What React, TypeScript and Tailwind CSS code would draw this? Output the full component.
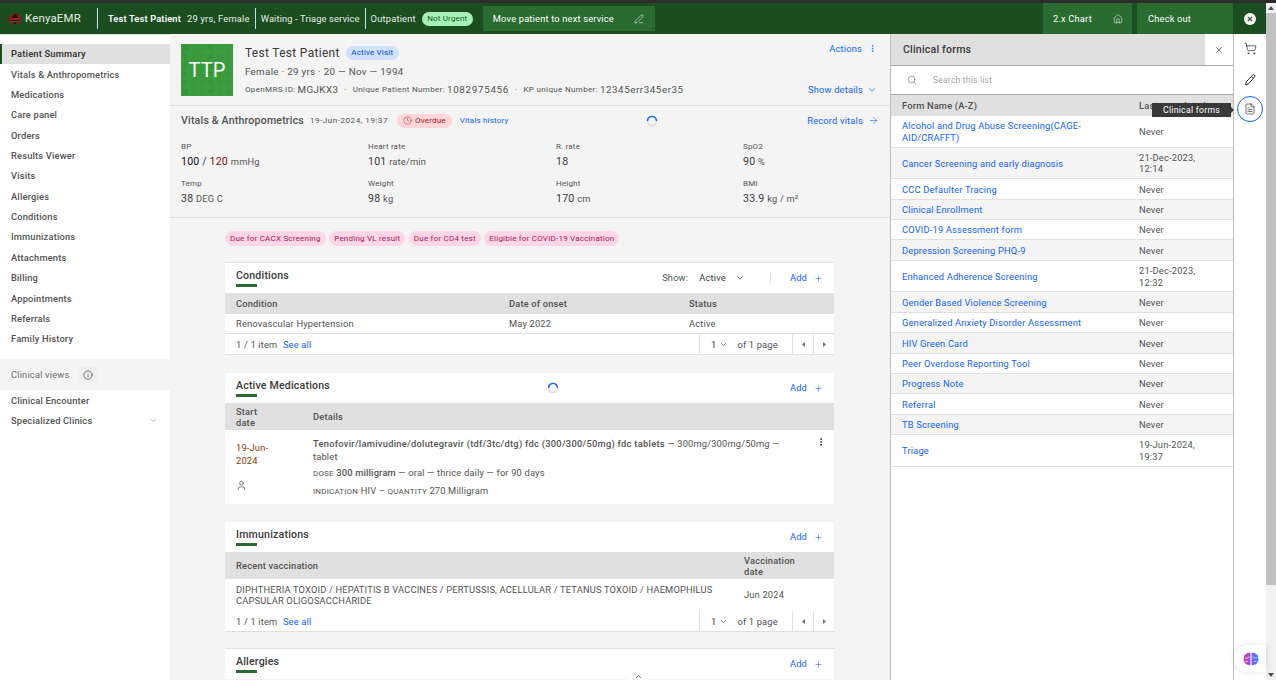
import { ArrowRight, ChevronDown, ChevronUp, Clock, EllipsisVertical, FileText, Home, Info, PenLine, Plus, Search, ShoppingCart, User, X } from 'lucide-react';
import type { ReactNode } from 'react';

const navItems = ['Patient Summary', 'Vitals & Anthropometrics', 'Medications', 'Care panel', 'Orders', 'Results Viewer', 'Visits', 'Allergies', 'Conditions', 'Immunizations', 'Attachments', 'Billing', 'Appointments', 'Referrals', 'Family History'];

const vitals = [
  { label: 'Heart rate', value: '101', unit: 'rate/min' },
  { label: 'R. rate', value: '18', unit: '' },
  { label: 'SpO2', value: '90', unit: '%' },
  { label: 'Temp', value: '38', unit: 'DEG C' },
  { label: 'Weight', value: '98', unit: 'kg' },
  { label: 'Height', value: '170', unit: 'cm' },
  { label: 'BMI', value: '33.9', unit: 'kg / m²' },
];

const forms = [
  { name: 'Alcohol and Drug Abuse Screening(CAGE-AID/CRAFFT)', last: 'Never', tall: true },
  { name: 'Cancer Screening and early diagnosis', last: '21-Dec-2023, 12:14', tall: true },
  { name: 'CCC Defaulter Tracing', last: 'Never' },
  { name: 'Clinical Enrollment', last: 'Never' },
  { name: 'COVID-19 Assessment form', last: 'Never' },
  { name: 'Depression Screening PHQ-9', last: 'Never' },
  { name: 'Enhanced Adherence Screening', last: '21-Dec-2023, 12:32', tall: true },
  { name: 'Gender Based Violence Screening', last: 'Never' },
  { name: 'Generalized Anxiety Disorder Assessment', last: 'Never' },
  { name: 'HIV Green Card', last: 'Never' },
  { name: 'Peer Overdose Reporting Tool', last: 'Never' },
  { name: 'Progress Note', last: 'Never' },
  { name: 'Referral', last: 'Never' },
  { name: 'TB Screening', last: 'Never' },
  { name: 'Triage', last: '19-Jun-2024, 19:37', tall: true },
];

const tags = ['Due for CACX Screening', 'Pending VL result', 'Due for CD4 test', 'Eligible for COVID-19 Vaccination'];

function Spinner() {
  return (
    <svg width="12" height="12" viewBox="0 0 12 12" fill="none">
      <circle cx="6" cy="6" r="4.5" stroke="#d8d8d8" strokeWidth="1.4" />
      <path d="M1.5 6a4.5 4.5 0 0 1 8.2-2.6A4.5 4.5 0 0 1 10.5 6" stroke="#0f62fe" strokeWidth="1.4" />
    </svg>
  );
}

function Vital({ label, value, unit }: { label: string; value: ReactNode; unit: string }) {
  return (
    <div>
      <div className="text-[8px] leading-[12px] text-[#525252]">{label}</div>
      <div className="mt-[2px] text-[10.6px] leading-[14px] text-[#393939]">
        {value} <span className="text-[9.3px] text-[#525252]">{unit}</span>
      </div>
    </div>
  );
}

function CardHeader({ title, children }: { title: string; children: ReactNode }) {
  return (
    <div className="flex h-[30px] items-center justify-between px-[11px]">
      <div>
        <div className="text-[10.6px] font-medium leading-[14px] text-[#393939]">{title}</div>
        <div className="mt-[1px] h-[3px] w-[21px] bg-[#2c6b30]" />
      </div>
      {children}
    </div>
  );
}

function AddLink() {
  return (
    <div className="flex items-center gap-[7px] text-[9.3px] text-[#0f62fe]">
      Add <Plus size={9} strokeWidth={1.5} />
    </div>
  );
}

function Caret({ dir }: { dir: 'left' | 'right' }) {
  return (
    <svg width="3" height="5" viewBox="0 0 3 5" fill="#6f6f6f">
      <polygon points={dir === 'left' ? '3,0 3,5 0,2.5' : '0,0 0,5 3,2.5'} />
    </svg>
  );
}

function Pager() {
  return (
    <div className="flex h-[21px] items-center justify-between border-b border-[#e0e0e0] bg-white pl-[11px] text-[9.3px] text-[#525252]">
      <div className="pt-[1px]">
        1 / 1 item <span className="ml-[3px] text-[#0f62fe]">See all</span>
      </div>
      <div className="flex h-full items-center">
        <div className="flex h-full w-[93px] items-center border-l border-[#e0e0e0] pl-[11px] pt-[1px]">
          <span className="text-[#393939]">1</span>
          <ChevronDown size={9} className="ml-[3px]" />
          <span className="ml-[9px]">of 1 page</span>
        </div>
        <div className="flex h-full w-[21px] items-center justify-center border-l border-[#e0e0e0]"><Caret dir="left" /></div>
        <div className="flex h-full w-[21px] items-center justify-center border-l border-[#e0e0e0]"><Caret dir="right" /></div>
      </div>
    </div>
  );
}

function Tile() {
  const cells = Array.from({ length: 36 }, (_, i) => i);
  return (
    <svg className="absolute inset-0" width="52" height="52" viewBox="0 0 52 52">
      {cells.map(i => (
        <rect key={i} x={(i % 6) * 8.7 + 1.5} y={Math.floor(i / 6) * 8.7 + 1.5} width={i % 5 === 0 ? 6 : 4} height={i % 5 === 0 ? 6 : 4} fill="#2f8a35" opacity={i % 3 === 0 ? 0.45 : 0.25} />
      ))}
    </svg>
  );
}

export default function App() {
  return (
    <div className="flex h-[680px] w-[1276px] flex-col overflow-hidden bg-white font-['Roboto',sans-serif] tracking-[0.18px] text-[#525252]">
      <div className="h-[3px] shrink-0 bg-[#2d2d2d]" />
      <div className="flex min-h-0 flex-1">
        <div className="flex min-w-0 flex-1 flex-col">
          {/* top bar */}
          <header className="flex h-[31px] shrink-0 items-center bg-[#1b4d21] text-[9.3px] text-[#e6efe6]">
            <svg className="ml-[8px]" width="14" height="12" viewBox="0 0 14 12">
              <ellipse cx="7" cy="6" rx="6.6" ry="5.6" fill="#7f1d1d" />
              <path d="M7 0.6c2 1.4 2.8 3.4 2.8 5.4S9 10 7 11.4C5 10 4.2 8 4.2 6S5 2 7 0.6z" fill="#111" />
              <rect x="4.4" y="5" width="5.2" height="2" fill="#b91c1c" />
              <rect x="4.6" y="8" width="4.8" height="1.2" fill="#15803d" />
            </svg>
            <span className="ml-[3px] text-[11.4px] tracking-[0.2px]">KenyaEMR</span>
            <div className="ml-[16px] h-[21px] w-px bg-[#bfe3ee]" />
            <span className="ml-[10px] font-semibold tracking-[0.15px] text-white">Test Test Patient</span>
            <span className="ml-[6px] tracking-[0.22px]">29 yrs, Female</span>
            <div className="ml-[5px] h-[21px] w-px bg-[#bfe3ee]" />
            <span className="ml-[5px] tracking-[0.13px]">Waiting - Triage service</span>
            <div className="ml-[5px] h-[21px] w-px bg-[#bfe3ee]" />
            <span className="ml-[5px] tracking-[0.2px]">Outpatient</span>
            <span className="ml-[6px] flex h-[14px] w-[51px] items-center justify-center rounded-full bg-[#a7f0ba] text-[8px] text-[#0e6027]">Not Urgent</span>
            <div className="ml-[10px] flex h-[25px] w-[172px] items-center justify-between bg-[#2a6b2f] pl-[10px] pr-[11px] text-white">
              Move patient to next service
              <PenLine size={10} strokeWidth={1.3} />
            </div>
            <div className="ml-auto flex h-full w-[89px] items-center justify-between bg-[#2a6b2f] pl-[10px] pr-[9px] text-white">
              2.x Chart
              <Home size={10} strokeWidth={1.3} />
            </div>
            <div className="ml-[5px] flex h-full w-[96px] items-center bg-[#2a6b2f] pl-[11px] text-white">Check out</div>
            <div className="flex h-full w-[33px] items-center justify-center">
              <svg width="12" height="12" viewBox="0 0 12 12">
                <circle cx="6" cy="6" r="6" fill="#fff" />
                <path d="M3.8 3.8l4.4 4.4M8.2 3.8L3.8 8.2" stroke="#1b4d21" strokeWidth="1.2" />
              </svg>
            </div>
          </header>

          <div className="flex min-h-0 flex-1">
            {/* left nav */}
            <nav className="w-[170px] shrink-0 border-t border-[#e0e0e0] pt-[9px] text-[9.3px] font-medium">
              {navItems.map((item, i) => (
                <div key={item} className={i === 0 ? 'flex h-[20.36px] items-center border-l-2 border-[#1b4d21] bg-[#e0e0e0] pl-[9px] font-semibold text-[#393939]' : 'flex h-[20.36px] items-center pl-[11px] text-[#525252]'}>
                  {item}
                </div>
              ))}
              <div className="mt-[10px] flex h-[31px] items-center bg-[#f4f4f4] pl-[11px] font-normal text-[#6f6f6f]">
                Clinical views
                <div className="ml-[10px] flex h-[15px] w-[18px] items-center justify-center bg-[#efefef]">
                  <Info size={10} strokeWidth={1.3} className="text-[#161616]" />
                </div>
              </div>
              <div className="flex h-[20.36px] items-center pl-[11px]">Clinical Encounter</div>
              <div className="flex h-[20.36px] items-center justify-between pl-[11px] pr-[12px]">
                Specialized Clinics
                <ChevronDown size={9} strokeWidth={1.2} />
              </div>
            </nav>

            {/* main */}
            <main className="min-w-0 flex-1 overflow-hidden bg-[#f4f4f4]">
              <section className="flex h-[72px] border-b border-[#e0e0e0] pl-[11px] pr-[13px] pt-[10px]">
                <div className="relative flex h-[52px] w-[52px] shrink-0 items-center justify-center bg-[#3b9c3f] text-[20px] text-white">
                  <Tile />
                  <span className="relative">TTP</span>
                </div>
                <div className="ml-[12px] flex-1 pt-[2px]">
                  <div className="flex items-center text-[11.9px] leading-[14px] text-[#393939]">
                    <span className="tracking-[0.35px]">Test Test Patient</span>
                    <span className="ml-[6px] flex h-[14px] w-[53px] items-center justify-center rounded-full bg-[#d0e2ff] text-[8px] text-[#0043ce]">Active Visit</span>
                  </div>
                  <div className="mt-[5px] text-[9.8px] leading-[14px] tracking-[0.3px]">Female · 29 yrs · 20 — Nov — 1994</div>
                  <div className="mt-[4px] flex items-center text-[8px] leading-[14px] tracking-[0.35px]">
                    OpenMRS ID:<span className="ml-[2px] text-[9.8px] tracking-[0.4px]">MGJKX3</span>
                    <span className="mx-[6px]">·</span>
                    Unique Patient Number:<span className="ml-[2px] text-[9.8px] tracking-[0.7px]">1082975456</span>
                    <span className="mx-[6px]">·</span>
                    KP unique Number:<span className="ml-[2px] text-[9.8px] tracking-[0.55px]">12345err345er35</span>
                  </div>
                </div>
                <div className="flex flex-col items-end justify-between pb-[8px] text-[9.3px] text-[#0f62fe]">
                  <div className="-mt-[2px] flex items-center gap-[6px]">Actions <EllipsisVertical size={9} /></div>
                  <div className="flex items-center gap-[4px]">Show details <ChevronDown size={10} /></div>
                </div>
              </section>

              <section className="h-[112px] border-b border-[#e0e0e0] px-[11px]">
                <div className="flex h-[29px] items-center">
                  <span className="text-[10.6px] font-medium text-[#525252]">Vitals &amp; Anthropometrics</span>
                  <span className="ml-[6px] text-[8px] tracking-[0.55px]">19-Jun-2024, 19:37</span>
                  <span className="ml-[9px] flex h-[14px] items-center gap-[3px] rounded-full bg-[#ffd7d9] px-[6px] text-[8px] text-[#a2191f]">
                    <Clock size={9} strokeWidth={1.3} /> Overdue
                  </span>
                  <span className="ml-[8px] text-[8px] text-[#0f62fe]">Vitals history</span>
                  <span className="ml-[138px]"><Spinner /></span>
                  <span className="ml-auto flex items-center gap-[5px] text-[9.3px] text-[#0f62fe]">Record vitals <ArrowRight size={11} strokeWidth={1.3} /></span>
                </div>
                <div className="mt-[6px] grid grid-cols-[187px_188px_187px_1fr] gap-y-[9px]">
                  <Vital label="BP" value={<><span className="text-[#161616]">100</span> / <span className="text-[#750e13]">120</span></>} unit="mmHg" />
                  {vitals.map(v => <Vital key={v.label} {...v} />)}
                </div>
              </section>

              <div className="pl-[55px] pr-[56px]">
                <div className="flex gap-[3.5px] pt-[13px]">
                  {tags.map(t => (
                    <span key={t} className="flex h-[15px] items-center rounded-full bg-[#ffd6e8] px-[5px] text-[8px] tracking-[0.22px] text-[#9f1853]">{t}</span>
                  ))}
                </div>

                <section className="mt-[16px] border-t border-[#e0e0e0] bg-white">
                  <CardHeader title="Conditions">
                    <div className="flex items-center text-[9.3px]">
                      <span>Show:</span>
                      <span className="ml-[11px] text-[#393939]">Active</span>
                      <ChevronDown size={10} className="ml-[9px] text-[#393939]" />
                      <div className="ml-[25px] h-[10px] w-px bg-[#e0e0e0]" />
                      <div className="ml-[19px]"><AddLink /></div>
                    </div>
                  </CardHeader>
                  <div className="grid h-[21px] grid-cols-[273px_180px_1fr] items-center bg-[#e0e0e0] pl-[11px] text-[9.3px] font-medium text-[#525252]">
                    <span>Condition</span><span>Date of onset</span><span>Status</span>
                  </div>
                  <div className="grid h-[20px] grid-cols-[273px_180px_1fr] items-center border-b border-[#e0e0e0] pl-[11px] text-[9.3px]">
                    <span>Renovascular Hypertension</span><span>May 2022</span><span>Active</span>
                  </div>
                  <Pager />
                </section>

                <section className="mt-[18px] bg-white">
                  <CardHeader title="Active Medications">
                    <div className="flex flex-1 items-center">
                      <span className="ml-[217px]"><Spinner /></span>
                      <div className="ml-auto"><AddLink /></div>
                    </div>
                  </CardHeader>
                  <div className="grid h-[27px] grid-cols-[77px_1fr] items-center bg-[#e0e0e0] pl-[11px] text-[9.3px] font-medium leading-[11px]">
                    <span className="w-[30px]">Start date</span><span>Details</span>
                  </div>
                  <div className="grid h-[74px] grid-cols-[77px_1fr_18px] pl-[11px] pt-[11px] text-[9.3px] leading-[14px]">
                    <div>
                      <div className="w-[40px] leading-[13px] text-[#8a3800]">19-Jun-2024</div>
                      <User size={11} strokeWidth={1.2} className="mt-[13px] text-[#161616]" />
                    </div>
                    <div className="-mt-[4px] w-[475px]">
                      <div className="leading-[13px]"><span className="font-medium tracking-[0.28px]">Tenofovir/lamivudine/dolutegravir (tdf/3tc/dtg) fdc (300/300/50mg) fdc tablets</span> — 300mg/300mg/50mg — tablet</div>
                      <div className="mt-[3px]"><span className="text-[8px]">DOSE</span> <span className="font-medium">300 milligram</span> — oral — thrice daily — for 90 days</div>
                      <div className="mt-[3px]"><span className="text-[8px]">INDICATION</span> HIV – <span className="text-[8px]">QUANTITY</span> 270 Milligram</div>
                    </div>
                    <EllipsisVertical size={10} className="-mt-[4px] text-[#161616]" />
                  </div>
                </section>

                <section className="mt-[18px] bg-white">
                  <CardHeader title="Immunizations"><AddLink /></CardHeader>
                  <div className="grid h-[27px] grid-cols-[508px_1fr] items-center bg-[#e0e0e0] pl-[11px] text-[9.3px] font-medium leading-[11px]">
                    <span>Recent vaccination</span><span className="w-[60px]">Vaccination date</span>
                  </div>
                  <div className="grid h-[32px] grid-cols-[508px_1fr] items-center pl-[11px] text-[9.3px] leading-[11.5px]">
                    <span className="w-[490px]">DIPHTHERIA TOXOID / HEPATITIS B VACCINES / PERTUSSIS, ACELLULAR / TETANUS TOXOID / HAEMOPHILUS CAPSULAR OLIGOSACCHARIDE</span>
                    <span>Jun 2024</span>
                  </div>
                  <Pager />
                </section>

                <section className="mt-[16px] border-t border-[#e0e0e0] bg-white">
                  <CardHeader title="Allergies"><AddLink /></CardHeader>
                </section>
              </div>
            </main>

            {/* clinical forms panel */}
            <aside className="flex w-[343px] shrink-0 flex-col border-l border-[#bdbdbd]">
              <div className="flex h-[31px] shrink-0 items-center justify-between bg-[#e0e0e0] pl-[12px]">
                <span className="text-[10.6px] font-medium text-[#393939]">Clinical forms</span>
                <div className="flex h-full w-[28px] items-center justify-center bg-white text-[#161616]"><X size={10} strokeWidth={1.4} /></div>
              </div>
              <div className="flex h-[30px] shrink-0 items-center border-y border-[#a8a8a8] pl-[16px] text-[8.6px] text-[#a8a8a8]">
                <Search size={10} strokeWidth={1.3} className="text-[#525252]" />
                <span className="ml-[16px]">Search this list</span>
              </div>
              <div className="grid h-[21px] shrink-0 grid-cols-[237px_1fr] items-center bg-[#e0e0e0] pl-[11px] text-[9.3px] font-medium">
                <span>Form Name (A-Z)</span><span>Last completed</span>
              </div>
              {forms.map((f, i) => (
                <div key={f.name} className={`grid shrink-0 grid-cols-[237px_1fr] items-center border-b border-[#e0e0e0] pl-[11px] pt-[1px] text-[9.3px] leading-[11.5px] ${f.tall ? 'h-[31.6px]' : 'h-[20.4px]'} ${i % 2 ? 'bg-[#f4f4f4]' : 'bg-white'}`}>
                  <span className="w-[205px] text-[#0f62fe]">{f.name}</span>
                  <span className="w-[70px]">{f.last}</span>
                </div>
              ))}
            </aside>

            {/* right rail */}
            <div className="flex w-[33px] shrink-0 flex-col items-center border-l border-[#bdbdbd] pt-[7px] text-[#161616]">
              <div className="flex h-[15px] items-center"><ShoppingCart size={13} strokeWidth={1.2} /></div>
              <div className="mt-[16px] flex h-[15px] items-center">
                <svg width="12" height="12" viewBox="0 0 12 12" fill="none" stroke="currentColor" strokeWidth="0.9" strokeLinejoin="round">
                  <path d="M8.6 1.2a1.3 1.3 0 0 1 2 1.7L4.6 9.8 1.6 11l.6-3.2z" />
                  <path d="M7.4 2.6l2 1.7" />
                </svg>
              </div>
              <div className="mt-[9px] flex h-[26px] w-[26px] items-center justify-center rounded-full border border-[#0f62fe]"><FileText size={12} strokeWidth={1.2} /></div>
            </div>
          </div>
        </div>

        {/* scrollbar */}
        <div className="flex w-[10px] shrink-0 flex-col items-center bg-[#f1f1f1]">
          <div className="flex h-[10px] items-center"><svg width="6" height="4" viewBox="0 0 6 4" fill="#505050"><polygon points="3,0 6,4 0,4" /></svg></div>
          <div className="h-[572px] w-full bg-[#c1c1c1]" />
          <div className="mt-auto flex h-[10px] items-center"><svg width="6" height="4" viewBox="0 0 6 4" fill="#505050"><polygon points="0,0 6,0 3,4" /></svg></div>
        </div>
      </div>

      {/* tooltip */}
      <div className="absolute left-[1152px] top-[103px] flex h-[14px] w-[79px] items-center justify-center bg-[#393939] text-[8.6px] tracking-[0.3px] text-white">
        Clinical forms
        <div className="absolute -right-[3px] top-[4px] h-0 w-0 border-y-[3px] border-l-[3px] border-y-transparent border-l-[#393939]" />
      </div>

      {/* assistant chip */}
      <div className="absolute left-[1234px] top-[645px] flex h-[27px] w-[32px] items-center rounded-l-full bg-white pl-[9px] shadow-[0_0_6px_rgba(0,0,0,0.12)]">
        <svg width="16" height="14" viewBox="0 0 16 14">
          <defs>
            <linearGradient id="brain" x1="0" x2="1" y1="0" y2="0">
              <stop offset="0" stopColor="#e0409a" />
              <stop offset="0.5" stopColor="#8a4ff0" />
              <stop offset="1" stopColor="#2f8cff" />
            </linearGradient>
          </defs>
          <path d="M7.4 1C5.6.2 4 .8 3.4 2 1.6 2.4.6 4 1 5.6 0 7 .3 9 1.6 10c.2 1.8 1.9 3 3.6 2.8.8.8 1.6.6 2.2 0zM8.6 1c1.8-.8 3.4-.2 4 1 1.8.4 2.8 2 2.4 3.6 1 1.4.7 3.4-.6 4.4-.2 1.8-1.9 3-3.6 2.8-.8.8-1.6.6-2.2 0z" fill="url(#brain)" />
          <path d="M2 6h3l1.2-1.6M2.6 9.4h2.6M10 4.4L11 6h3M10.8 9.4h2.6" stroke="#fff" strokeWidth="0.7" fill="none" />
        </svg>
      </div>

      {/* scroll up tab */}
      <div className="absolute left-[627px] top-[672px] flex h-[8px] w-[22px] items-center justify-center bg-white text-[#393939]">
        <ChevronUp size={9} />
      </div>
    </div>
  );
}
